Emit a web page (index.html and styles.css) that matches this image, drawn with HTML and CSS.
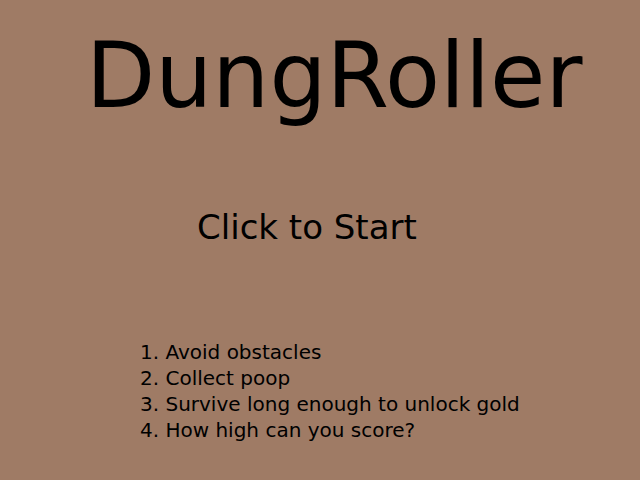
FILE: index.html
```html
<!DOCTYPE html>
<html>
<head>
<meta charset="utf-8">
<link rel="stylesheet" href="styles.css">
</head>
<body>
<main class="screen">
  <h1 class="title">DungRoller</h1>
  <p class="start">Click to Start</p>
  <ol class="rules">
    <li>1. Avoid obstacles</li>
    <li>2. Collect poop</li>
    <li>3. Survive long enough to unlock gold</li>
    <li>4. How high can you score?</li>
  </ol>
</main>
</body>
</html>
```

FILE: styles.css
```css
html, body {
  margin: 0;
  padding: 0;
  background: #9f7b65;
}
.screen {
  width: 640px;
  height: 480px;
  display: flex;
  flex-direction: column;
  font-family: "DejaVu Sans", sans-serif;
  color: #000;
}
.title {
  margin: 22px 0 0 86px;
  font-size: 90px;
  font-weight: normal;
  line-height: 108px;
}
.start {
  margin: 77px 0 0 197px;
  font-size: 34px;
  line-height: 40px;
}
.rules {
  list-style: none;
  margin: 92px 0 0 140px;
  padding: 0;
  font-size: 20px;
  line-height: 26px;
}
```
